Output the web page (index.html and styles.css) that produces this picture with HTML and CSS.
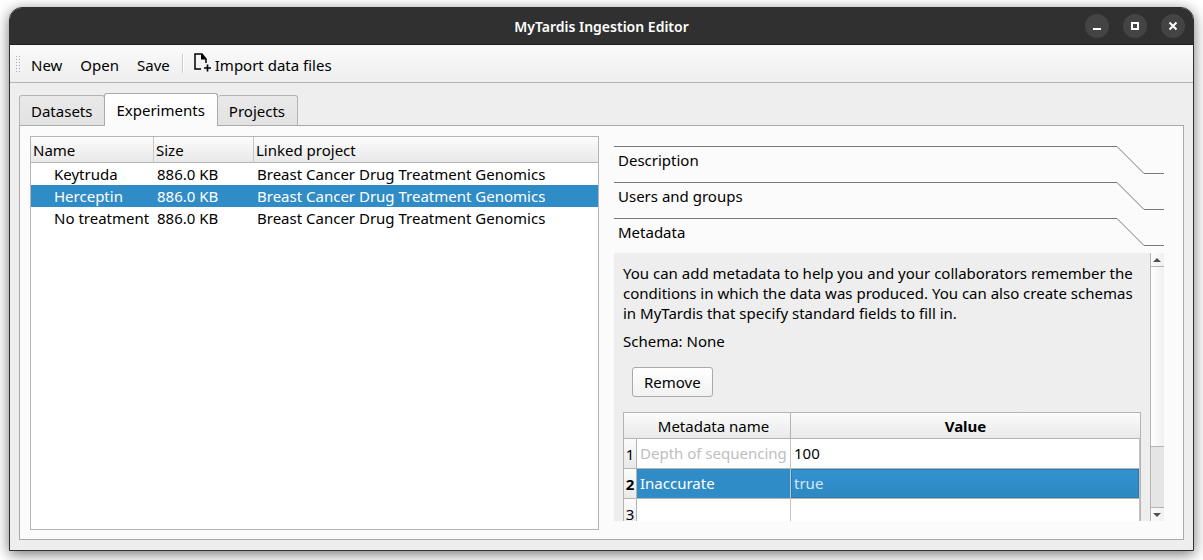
FILE: index.html
```html
<!DOCTYPE html>
<html lang="en">
<head>
<meta charset="utf-8">
<title>MyTardis Ingestion Editor</title>
<link rel="stylesheet" href="styles.css">
</head>
<body>
<div class="window">
  <header class="titlebar">
    <h1 class="title">MyTardis Ingestion Editor</h1>
    <div class="window-buttons">
      <button class="window-button" type="button" aria-label="Minimize"><svg width="24" height="24"><path d="M8 14h8v2H8z" fill="#fff"/></svg></button>
      <button class="window-button" type="button" aria-label="Maximize"><svg width="24" height="24"><path d="M9 9h6v6H9z" fill="none" stroke="#fff" stroke-width="2"/></svg></button>
      <button class="window-button" type="button" aria-label="Close"><svg width="24" height="24"><path d="M8.500 8.500l7 7M15.500 8.500l-7 7" fill="none" stroke="#fff" stroke-width="2"/></svg></button>
    </div>
  </header>

  <nav class="toolbar">
    <span class="grip"></span>
    <button class="tool" type="button">New</button>
    <button class="tool" type="button">Open</button>
    <button class="tool" type="button">Save</button>
    <span class="separator"></span>
    <button class="tool tool-import" type="button">
      <svg class="import-icon" width="20" height="20"><path d="M9 17H3V2h7l4 5v4" fill="none" stroke="#000" stroke-width="1.500"/><path d="M9 1.500l5.500 6H9z"/><path d="M15.500 12.500v7M12 16h7" stroke="#000" stroke-width="1.700"/></svg>Import data files
    </button>
  </nav>

  <main class="content">
    <div class="tabs" role="tablist">
      <button class="tab" type="button" role="tab">Datasets</button>
      <button class="tab tab-active" type="button" role="tab" aria-selected="true">Experiments</button>
      <button class="tab" type="button" role="tab">Projects</button>
    </div>
    <div class="pane">
      <div class="tree">
        <table class="tree-table">
          <colgroup><col class="col-name"><col class="col-size"><col></colgroup>
          <thead><tr><th>Name</th><th>Size</th><th>Linked project</th></tr></thead>
          <tbody>
            <tr><td>Keytruda</td><td>886.0 KB</td><td>Breast Cancer Drug Treatment Genomics</td></tr>
            <tr class="selected"><td>Herceptin</td><td>886.0 KB</td><td>Breast Cancer Drug Treatment Genomics</td></tr>
            <tr><td>No treatment</td><td>886.0 KB</td><td>Breast Cancer Drug Treatment Genomics</td></tr>
          </tbody>
        </table>
      </div>

      <section class="toolbox">
        <button class="section" type="button"><span class="section-label">Description</span><svg class="slope" width="47" height="28"><path d="M0 .5L27 27.500H47"/></svg></button>
        <button class="section" type="button"><span class="section-label">Users and groups</span><svg class="slope" width="47" height="28"><path d="M0 .5L27 27.500H47"/></svg></button>
        <button class="section" type="button" aria-expanded="true"><span class="section-label">Metadata</span><svg class="slope" width="47" height="28"><path d="M0 .5L27 27.500H47"/></svg></button>
        <div class="scroll-area">
          <div class="metadata">
            <p class="hint">You can add metadata to help you and your collaborators remember the conditions in which the data was produced. You can also create schemas in MyTardis that specify standard fields to fill in.</p>
            <p class="schema">Schema: None</p>
            <button class="remove" type="button">Remove</button>
            <table class="meta-table">
              <colgroup><col class="col-number"><col class="col-key"><col></colgroup>
              <thead><tr><th class="corner"></th><th class="key-head">Metadata name</th><th class="value-head">Value</th></tr></thead>
              <tbody>
                <tr><th>1</th><td class="muted">Depth of sequencing</td><td>100</td></tr>
                <tr class="picked"><th>2</th><td>Inaccurate</td><td class="current">true</td></tr>
                <tr><th>3</th><td></td><td></td></tr>
              </tbody>
            </table>
          </div>
          <div class="scrollbar">
            <button class="arrow arrow-up" type="button" aria-label="Scroll up"><svg width="8" height="4"><path d="M4 0l4 4H0z"/></svg></button>
            <div class="track"><div class="thumb"></div></div>
            <button class="arrow arrow-down" type="button" aria-label="Scroll down"><svg width="8" height="4"><path d="M0 0h8L4 4z"/></svg></button>
          </div>
        </div>
      </section>
    </div>
  </main>
</div>
</body>
</html>
```
FILE: styles.css
```css
* { box-sizing: border-box; }

body {
  margin: 0;
  height: 100vh;
  padding: 7px 9px 9px;
  background: #fff;
  color: #000;
  font: 15px/20px "Noto Sans", sans-serif;
  overflow: hidden;
}

button {
  margin: 0;
  padding: 0;
  border: 0;
  background: none;
  color: inherit;
  font: inherit;
}

svg { display: block; }

.window {
  display: flex;
  flex-direction: column;
  height: 100%;
  border: 1px solid #303030;
  border-radius: 13px 13px 0 0;
  background: #eee;
  box-shadow: 0 3px 14px rgba(0, 0, 0, .55);
}

/* Title bar */
.titlebar {
  display: grid;
  grid-template-columns: 1fr auto 1fr;
  align-items: center;
  height: 37px;
  padding: 0 8px;
  flex: none;
  border-bottom: 1px solid #1f1f1f;
  border-radius: 12px 12px 0 0;
  background: #303030;
}

.title {
  grid-column: 2;
  margin: 0;
  padding-top: 2px;
  color: #fff;
  font-size: 14px;
  font-weight: 600;
}

.window-buttons {
  display: flex;
  justify-content: flex-end;
  gap: 14px;
}

.window-button {
  width: 24px;
  height: 24px;
  border-radius: 50%;
  background: #444;
}

/* Toolbar */
.toolbar {
  display: flex;
  align-items: center;
  flex: none;
  height: 38px;
  padding: 0 5px;
  border-bottom: 1px solid #b4b4b4;
  background: linear-gradient(#fafafa, #eee);
}

.grip {
  width: 6px;
  height: 18px;
  margin-right: 10px;
  background: radial-gradient(circle, #aaa 1px, transparent 1px) 0 0 / 3px 3px;
}

.tool { margin-right: 18px; padding-top: 2px; }

.separator {
  width: 2px;
  height: 19px;
  margin: 0 8px 0 -6px;
  border-left: 1px solid #ccc;
  border-right: 1px solid #fff;
}

.tool-import {
  display: flex;
  margin-right: 0;
}

.import-icon {
  margin: -3px 3px 0 0;
}

/* Tabs */
.content {
  display: flex;
  flex-direction: column;
  flex: 1;
  min-height: 0;
  padding: 10px 9px;
}

.tabs {
  display: flex;
  align-items: flex-end;
  flex: none;
}

.tab {
  height: 31px;
  padding: 0 12px 0 11px;
  border: 1px solid #b4b4b4;
  border-bottom-color: #aaa;
  border-radius: 3px 3px 0 0;
  background: linear-gradient(#e9e9e9, #e2e2e2);
}

.tab + .tab { border-left: 0; }

.tabs .tab-active {
  z-index: 1;
  height: 33px;
  border: 1px solid #aaa;
  border-bottom: 0;
  margin-left: -1px;
  background: linear-gradient(#fff, #fbfbfb);
}

.pane {
  display: grid;
  grid-template-columns: 569fr 550fr;
  grid-template-rows: minmax(0, 1fr);
  gap: 15px;
  flex: 1;
  min-height: 0;
  margin-top: -1px;
  padding: 10px 19px 9px 10px;
  border: 1px solid #aaa;
  background: #fbfbfb;
}

/* Experiment list */
.tree {
  border: 1px solid #b4b4b4;
  background: #fff;
  overflow: hidden;
}

table {
  width: 100%;
  border-collapse: separate;
  border-spacing: 0;
  table-layout: fixed;
}

th, td {
  padding: 0;
  white-space: nowrap;
}

.col-name { width: 123px; }
.col-size { width: 100px; }

.tree-table th {
  height: 26px;
  padding-left: 2px;
  border-right: 1px solid #c8c8c8;
  border-bottom: 1px solid #b4b4b4;
  background: linear-gradient(#fcfcfc, #f2f2f2 50%, #e9e9e9);
  font-weight: 400;
  text-align: left;
}

.tree-table th:last-child { border-right: 0; }

.tree-table td {
  height: 22px;
  padding-left: 3px;
}

.tree-table td:first-child { padding-left: 23px; }

.selected td {
  background: #308cc6;
  color: #fff;
}

/* Section headers */
.toolbox {
  display: flex;
  flex-direction: column;
  min-width: 0;
  padding: 10px 0 9px;
}

.section {
  display: flex;
  flex: none;
  height: 36px;
  text-align: left;
}

.section:nth-child(3) { height: 35px; }

.section-label {
  flex: 1;
  padding: 3px 4px;
  border-top: 1px solid #777;
}

.slope {
  fill: none;
  stroke: #777;
}

/* Metadata editor */
.scroll-area {
  display: flex;
  flex: 1;
  min-height: 0;
  background: #eee;
}

.metadata {
  flex: 1;
  min-width: 0;
  padding: 10px 9px 0;
  overflow: hidden;
}

.hint, .schema { margin: 0 0 8px; }

.remove {
  display: block;
  height: 30px;
  margin: 16px 9px 15px;
  padding: 0 11px;
  border: 1px solid #aaa;
  border-radius: 3px;
  background: linear-gradient(#fff, #f2f2f2);
}

.meta-table {
  border: 1px solid #b4b4b4;
  background: #fff;
}

.col-number { width: 13px; }
.col-key { width: 154px; }

.meta-table th {
  border-right: 1px solid #b4b4b4;
  border-bottom: 1px solid #b4b4b4;
  background: linear-gradient(#fcfcfc, #f2f2f2 50%, #e9e9e9);
  font-weight: 400;
}

.meta-table thead th { height: 26px; }
.meta-table .corner { border-right: 0; }
.meta-table .value-head { border-right: 0; font-weight: 700; }
.meta-table .picked th { font-weight: 700; }

.meta-table td {
  height: 30px;
  padding: 0 0 2px 3px;
  border-right: 1px solid #c4c4c4;
  border-bottom: 1px solid #b4b4b4;
}

.meta-table .muted { color: #bebebe; }

.picked td {
  background: #308cc6;
  color: #fff;
}

.picked .current {
  background: linear-gradient(#3492d0, #2e88c1);
  box-shadow: inset 0 0 0 1px #287cb2;
  color: #d2e8f6;
}

/* Scroll bar */
.scrollbar {
  display: flex;
  flex-direction: column;
  width: 14px;
  flex: none;
  border-left: 1px solid #b4b4b4;
  background: #e5e5e5;
}

.arrow {
  display: flex;
  align-items: center;
  justify-content: center;
  height: 13px;
  padding-right: 1px;
  flex: none;
  background: linear-gradient(90deg, #fcfcfc, #f0f0f0);
}

.arrow svg { fill: #505050; }
.arrow-down { border-top: 1px solid #b4b4b4; height: 14px; }

.track { flex: 1; }

.thumb {
  height: 75%;
  border: solid #b4b4b4;
  border-width: 1px 0;
  background: linear-gradient(90deg, #fff, #f0f0f0);
}
```
